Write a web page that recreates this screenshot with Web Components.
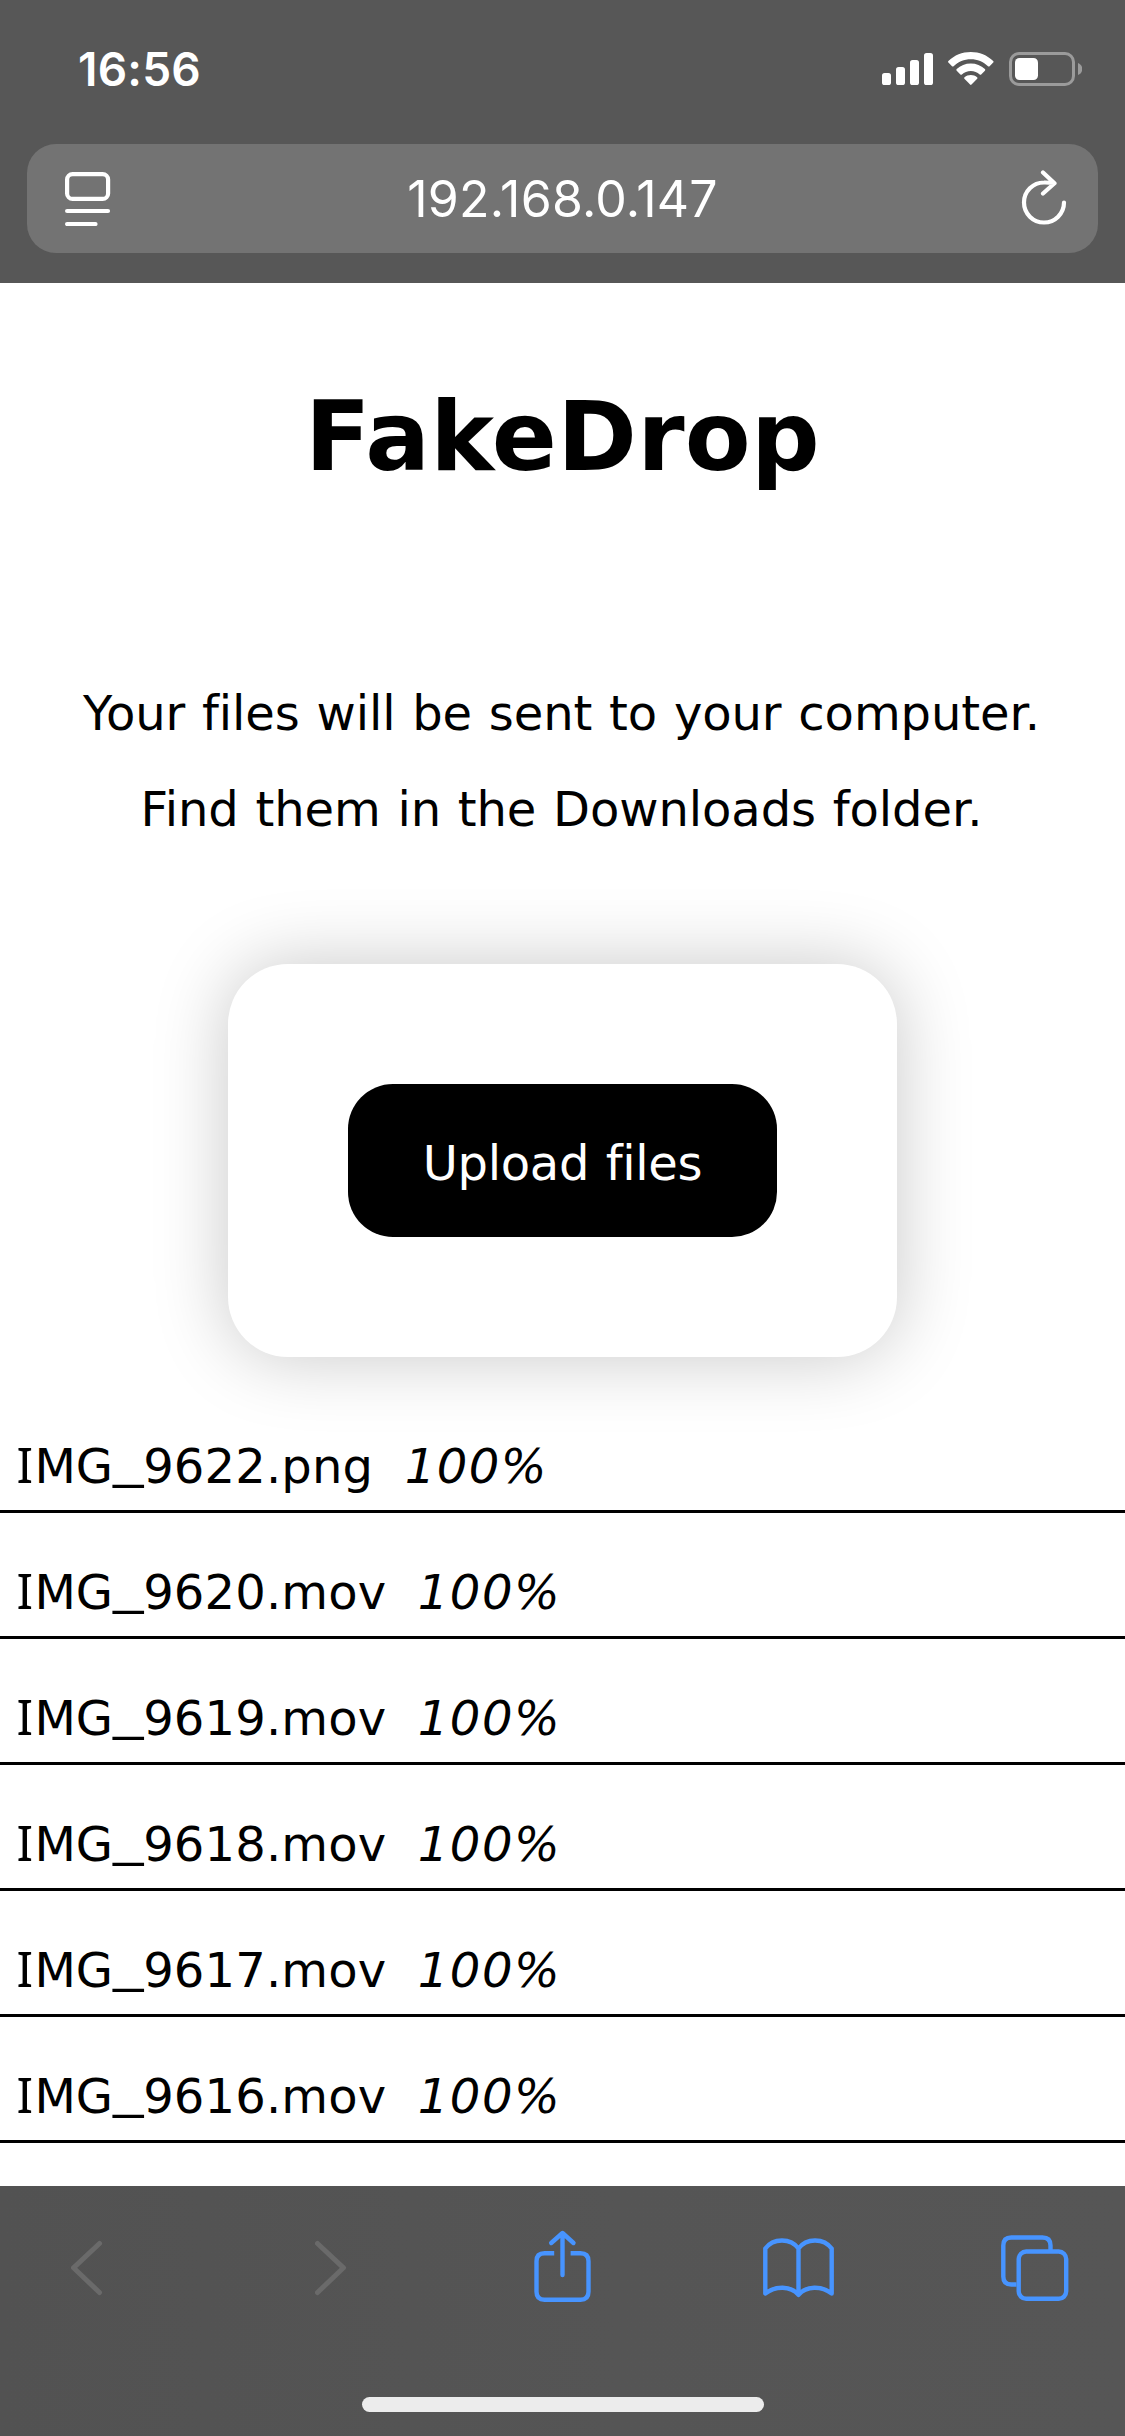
<!DOCTYPE html>
<html lang="en">
<head>
<meta charset="utf-8">
<title>FakeDrop</title>
<style>
html, body { margin: 0; padding: 0; background: #fff; }
body { width: 1125px; height: 2436px; overflow: hidden; }
</style>
</head>
<body>
<phone-screen>
  <status-bar slot="top" time="16:56"></status-bar>
  <address-bar slot="top">192.168.0.147</address-bar>
  <drop-page>
    <span slot="title">FakeDrop</span>
    <intro-line>Your files will be sent to your computer.</intro-line>
    <intro-line>Find them in the Downloads folder.</intro-line>
    <upload-card slot="upload">Upload files</upload-card>
    <file-row slot="files" name="IMG_9622.png">100%</file-row>
    <file-row slot="files" name="IMG_9620.mov">100%</file-row>
    <file-row slot="files" name="IMG_9619.mov">100%</file-row>
    <file-row slot="files" name="IMG_9618.mov">100%</file-row>
    <file-row slot="files" name="IMG_9617.mov">100%</file-row>
    <file-row slot="files" name="IMG_9616.mov">100%</file-row>
  </drop-page>
  <tool-bar slot="bottom"></tool-bar>
</phone-screen>
<script>
function define(name, html) {
  customElements.define(name, class extends HTMLElement {
    constructor() {
      super();
      this.attachShadow({ mode: 'open' }).innerHTML = typeof html === 'function' ? html(this) : html;
    }
  });
}

define('phone-screen', `
<style>
:host { display: flex; flex-direction: column; width: 1125px; height: 2436px; background: #fff; }
header { flex: none; height: 283px; background: #575757; display: flex; flex-direction: column; }
main { flex: 1; min-height: 0; }
</style>
<header><slot name="top"></slot></header>
<main><slot></slot></main>
<slot name="bottom"></slot>`);

define('status-bar', el => `
<style>
:host { display: flex; justify-content: space-between; height: 144px; color: #fff; box-sizing: border-box; padding: 42px 43px 0 78px; }
time { font: 600 46px/54px Inter, "Liberation Sans", sans-serif; letter-spacing: .2px; }
.icons { display: flex; align-items: flex-start; padding-top: 10px; }
svg { display: block; }
</style>
<time>${el.getAttribute('time')}</time>
<div class="icons">
  <svg width="200" height="34" viewBox="882 52 200 34" fill="#fff">
    <rect x="882" y="73" width="9" height="12" rx="2.6"/>
    <rect x="896" y="67" width="9" height="18" rx="2.6"/>
    <rect x="910" y="60" width="9" height="25" rx="2.6"/>
    <rect x="924" y="53" width="9" height="32" rx="2.6"/>
    <path d="M970.8 52c8.600 0 16.400 3.300 22.400 8.900.5.500.5 1.200 0 1.700l-3.600 3.600c-.4.500-1.100.5-1.600.1-4.600-4.400-10.600-7-17.200-7s-12.600 2.600-17.200 7c-.5.400-1.200.4-1.600-.1l-3.600-3.600c-.5-.5-.5-1.200 0-1.700 6-5.600 13.800-8.900 22.400-8.900z"/>
    <path d="M970.800 63.600c5.400 0 10.300 2 14.100 5.500.5.500.5 1.200 0 1.700l-3.700 3.700c-.4.400-1.100.4-1.500 0-2.400-2.200-5.500-3.500-8.900-3.500s-6.500 1.300-8.900 3.500c-.4.400-1.100.4-1.500 0l-3.700-3.700c-.5-.5-.5-1.200 0-1.700 3.800-3.500 8.700-5.500 14.100-5.500z"/>
    <path d="M970.800 75c2.400 0 4.600.8 6.300 2.200.5.500.5 1.100.1 1.600l-5.700 5.800c-.4.400-1 .4-1.400 0l-5.700-5.800c-.4-.5-.4-1.100.1-1.600 1.700-1.400 3.900-2.200 6.300-2.200z"/>
    <rect x="1010.500" y="53.500" width="63" height="31" rx="8.500" fill="none" stroke="#9b9b9b" stroke-width="3"/>
    <path d="M1078 63c2.700 1.100 4.300 3.400 4.300 6s-1.600 4.900-4.300 6z" fill="#9b9b9b"/>
    <rect x="1015" y="58" width="23" height="22" rx="4.500"/>
  </svg>
</div>`);

define('address-bar', `
<style>
:host { display: flex; align-items: center; justify-content: space-between; box-sizing: border-box; height: 109px; margin: 0 27px; padding: 0 31px 0 38px; border-radius: 29px; background: #737373; color: #fff; }
svg { display: block; flex: none; fill: none; stroke: #fff; stroke-width: 4.200; stroke-linecap: round; stroke-linejoin: round; }
span { flex: 1; margin-left: -7px; text-align: center; font: 400 50px/60px Inter, "Liberation Sans", sans-serif; letter-spacing: .25px; }
</style>
<svg width="46" height="54" viewBox="65 172 46 54"><rect x="67.100" y="174.100" width="41" height="24.800" rx="5.500"/><path d="M67.100 211H108M67.100 224H95.500"/></svg>
<span><slot></slot></span>
<svg width="46" height="58" viewBox="1021 169 46 58"><path d="M1064 201.500A20 20 0 1 1 1044 181.500C1048 181.400 1051 181.700 1054 182M1043 171.500L1054.500 182.200L1043 192.500"/></svg>`);

define('drop-page', `
<style>
:host { display: flex; flex-direction: column; height: 1903px; box-sizing: border-box; padding-top: 98px; overflow: hidden; color: #000; background: #fff; font-family: "DejaVu Sans", Verdana, sans-serif; font-variant-ligatures: none; }
h1 { margin: 0 0 172px; text-align: center; font-size: 96px; line-height: 112px; font-weight: 700; letter-spacing: .3px; }
.card { display: flex; justify-content: center; margin: 107px 0 30px; }
</style>
<h1><slot name="title"></slot></h1>
<slot></slot>
<div class="card"><slot name="upload"></slot></div>
<slot name="files"></slot>`);

define('intro-line', `
<style>
:host { display: block; text-align: center; font-size: 48px; line-height: 96px; word-spacing: 1.600px; letter-spacing: -.08px; padding-right: 2px; white-space: nowrap; }
</style><slot></slot>`);

define('upload-card', `
<style>
:host { display: block; box-sizing: border-box; width: 669px; height: 393px; padding: 120px; border-radius: 60px; background: #fff; box-shadow: 0 0 75px rgba(0,0,0,.22); }
button { display: block; box-sizing: border-box; width: 429px; height: 153px; margin: 0; padding: 51px 0 46px; border: 0; border-radius: 45px; background: #000; color: #fff; font: 48px/56px "DejaVu Sans", Verdana, sans-serif; font-variant-ligatures: none; letter-spacing: -.3px; word-spacing: 1.600px; text-align: center; }
</style><button><slot></slot></button>`);

define('file-row', el => {
  const [, rest] = el.getAttribute('name').split('_');
  return `
<style>
:host { display: block; flex: none; box-sizing: border-box; height: 126px; padding: 51px 16px 16px; border-bottom: 3px solid #000; font-size: 48px; line-height: 56px; white-space: nowrap; }
.i { font-family: "Noto Sans", sans-serif; font-size: 49px; line-height: 0; letter-spacing: 1.300px; margin-left: .5px; }
.m { letter-spacing: -.2px; }
.u { display: inline-block; width: 30.500px; line-height: 56px; transform: translateY(-6px) scaleX(1.270); transform-origin: 0 0; }
.r { letter-spacing: .15px; }
em { margin-left: 31.500px; letter-spacing: 1.500px; }
</style><span class="i">I</span><span class="m">MG</span><span class="u">_</span><span class="r">${rest}</span><em><slot></slot></em>`;
});

define('tool-bar', `
<style>
:host { display: flex; flex-direction: column; flex: none; height: 250px; background: linear-gradient(90deg, #525252, #555 55%, #565656); }
nav { display: grid; grid-template-columns: 173px 315px 149px 323px 149px; justify-items: center; padding-top: 42px; height: 80px; }
svg { display: block; fill: none; stroke: #4794ff; stroke-width: 4.400; stroke-linecap: round; stroke-linejoin: round; }
.off { stroke: #6a6a6a; stroke-width: 5; }
.home { width: 402px; height: 15px; margin: 89px auto 0; border-radius: 8px; background: #ececec; }
</style>
<nav>
  <svg class="off" width="32" height="80" viewBox="71 2228 32 80"><path d="M99.500 2243.500L73.500 2267.800L99.500 2292.500"/></svg>
  <svg class="off" width="32" height="80" viewBox="314.500 2228 32 80"><path d="M317 2243.500L343 2267.800L317 2292.500"/></svg>
  <svg width="58" height="80" viewBox="534 2228 58 80"><path stroke-linecap="butt" d="M554.200 2253.200H544.500Q536.500 2253.200 536.500 2261.200V2291.700Q536.500 2299.700 544.500 2299.700H580.500Q588.500 2299.700 588.500 2291.700V2261.200Q588.500 2253.200 580.500 2253.200H570.600"/><path d="M562.500 2275V2234M551.200 2243L562.500 2233L573.500 2243"/></svg>
  <svg width="72" height="80" viewBox="763 2228 72 80"><path d="M765.300 2248.500C773 2238 790.500 2237.500 798.500 2248.500C806.500 2237.500 824 2238 831.700 2248.500V2293.500C821.500 2285.800 806.500 2285.500 798.500 2294.800C790.500 2285.500 775.500 2285.800 765.300 2293.500ZM798.500 2248.500V2294.800"/></svg>
  <svg width="68" height="80" viewBox="1001 2228 68 80"><path stroke-linecap="butt" d="M1016.500 2284.500H1011.300Q1003.300 2284.500 1003.300 2276.500V2245.500Q1003.300 2237.500 1011.300 2237.500H1042.500Q1050.500 2237.500 1050.500 2245.500V2250"/><rect x="1018.700" y="2251.500" width="47.500" height="47.300" rx="7.500"/></svg>
</nav>
<div class="home"></div>`);
</script>
</body>
</html>
